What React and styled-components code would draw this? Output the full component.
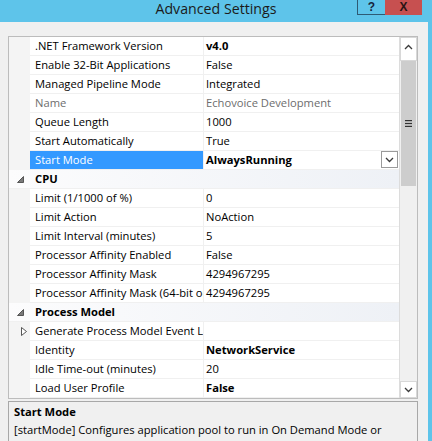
import React from 'react'
import styled, { createGlobalStyle } from 'styled-components'

const GlobalStyle = createGlobalStyle`
  html, body { margin: 0; padding: 0; }
  body {
    font-family: "Open Sans", "Noto Sans", sans-serif;
    font-size: 11.2px;
    color: #000;
  }
`

const rows = [
  { name: '.NET Framework Version', value: 'v4.0', bold: true },
  { name: 'Enable 32-Bit Applications', value: 'False' },
  { name: 'Managed Pipeline Mode', value: 'Integrated' },
  { name: 'Name', value: 'Echovoice Development', disabled: true },
  { name: 'Queue Length', value: '1000' },
  { name: 'Start Automatically', value: 'True' },
  { name: 'Start Mode', value: 'AlwaysRunning', bold: true, selected: true },
  { category: 'CPU' },
  { name: 'Limit (1/1000 of %)', value: '0' },
  { name: 'Limit Action', value: 'NoAction' },
  { name: 'Limit Interval (minutes)', value: '5' },
  { name: 'Processor Affinity Enabled', value: 'False' },
  { name: 'Processor Affinity Mask', value: '4294967295' },
  { name: 'Processor Affinity Mask (64-bit option)', value: '4294967295' },
  { category: 'Process Model' },
  { name: 'Generate Process Model Event Log Entry', value: '', collapsed: true },
  { name: 'Identity', value: 'NetworkService', bold: true },
  { name: 'Idle Time-out (minutes)', value: '20' },
  { name: 'Load User Profile', value: 'False', bold: true },
]

const Caret = ({ down }) => (
  <svg width="9" height="6" viewBox="0 0 9 6">
    <polyline
      points={down ? '1,1 4.5,4.5 8,1' : '1,5 4.5,1.5 8,5'}
      fill="none"
      stroke="#3a3a3a"
      strokeWidth="1.3"
    />
  </svg>
)

const ExpandedGlyph = () => (
  <svg width="7" height="7" viewBox="0 0 7 7">
    <polygon points="6.5,0.5 6.5,6.5 0.5,6.5" fill="#7a7a7a" stroke="#3c3c3c" strokeWidth="0.8" />
  </svg>
)

const CollapsedGlyph = () => (
  <svg width="6" height="9" viewBox="0 0 6 9">
    <polygon points="0.5,0.5 5.5,4.5 0.5,8.5" fill="#fff" stroke="#444" strokeWidth="0.9" />
  </svg>
)

const Grip = () => (
  <svg width="7" height="7" viewBox="0 0 7 7">
    <rect x="0" y="0" width="7" height="1.2" fill="#333" />
    <rect x="0" y="2.9" width="7" height="1.2" fill="#333" />
    <rect x="0" y="5.8" width="7" height="1.2" fill="#333" />
  </svg>
)

export default function App() {
  return (
    <Window>
      <GlobalStyle />
      <TitleBar>
        <Title>Advanced Settings</Title>
        <Controls>
          <HelpButton>?</HelpButton>
          <CloseButton>X</CloseButton>
        </Controls>
      </TitleBar>
      <Body>
        <Grid>
          <Rows>
            {rows.map((r, i) =>
              r.category ? (
                <CategoryRow key={i}>
                  <GlyphCell><ExpandedGlyph /></GlyphCell>
                  <CategoryName>{r.category}</CategoryName>
                </CategoryRow>
              ) : (
                <Row key={i}>
                  <Gutter>{r.collapsed && <CollapsedGlyph />}</Gutter>
                  <NameCell $selected={r.selected} $disabled={r.disabled}>
                    {r.name}
                  </NameCell>
                  <ValueCell $bold={r.bold} $disabled={r.disabled}>
                    <span>{r.value}</span>
                    {r.selected && (
                      <DropButton><Caret down /></DropButton>
                    )}
                  </ValueCell>
                </Row>
              )
            )}
          </Rows>
          <Scrollbar>
            <ArrowButton $tall><Caret /></ArrowButton>
            <Thumb><Grip /></Thumb>
            <ArrowButton $bottom><Caret down /></ArrowButton>
          </Scrollbar>
        </Grid>
        <Description>
          <DescTitle>Start Mode</DescTitle>
          <DescText>
            [startMode] Configures application pool to run in On Demand Mode or
            Always Running Mode.
          </DescText>
        </Description>
      </Body>
    </Window>
  )
}

const Window = styled.div`
  width: 432px;
  height: 441px;
  overflow: hidden;
  background: #5ec4ea;
  display: flex;
  flex-direction: column;
`

const TitleBar = styled.div`
  height: 22px;
  flex-shrink: 0;
  display: grid;
  grid-template-columns: 1fr auto 1fr;
  align-items: start;
`

const Title = styled.div`
  grid-column: 2;
  font-size: 14.2px;
  line-height: 18px;
  color: #1b1b1b;
`

const Controls = styled.div`
  grid-column: 3;
  justify-self: end;
  display: flex;
  margin-right: 10px;
`

const HelpButton = styled.div`
  width: 27px;
  height: 14px;
  border: 1px solid #2e5a74;
  border-top: none;
  border-right: none;
  text-align: center;
  font-family: "Liberation Sans", sans-serif;
  font-weight: bold;
  font-size: 12px;
  line-height: 14px;
  color: #17243d;
`

const CloseButton = styled.div`
  width: 37px;
  height: 15px;
  background: #c75050;
  text-align: center;
  font-family: "Liberation Sans", sans-serif;
  font-weight: bold;
  font-size: 12px;
  line-height: 15px;
  color: #2a1414;
`

const Body = styled.div`
  flex: 1;
  min-height: 0;
  margin-right: 4px;
  background: #f0f0f0;
  padding: 14px 10px 0 8px;
  display: flex;
  flex-direction: column;
`

const Grid = styled.div`
  flex-shrink: 0;
  height: 361px;
  border: 1px solid #bcbcbc;
  background: #fff;
  display: flex;
`

const Rows = styled.div`
  flex: 1;
  min-width: 0;
  display: flex;
  flex-direction: column;
  overflow: hidden;
`

const Row = styled.div`
  height: 19px;
  flex-shrink: 0;
  display: grid;
  grid-template-columns: 21px 174px 1fr;
`

const Gutter = styled.div`
  background: #f4f4f4;
  display: flex;
  align-items: center;
  padding-left: 12px;
`

const NameCell = styled.div`
  box-sizing: border-box;
  padding-left: 5px;
  line-height: 18px;
  white-space: nowrap;
  overflow: hidden;
  border-right: 1px solid #f0f0f0;
  border-bottom: 1px solid #f0f0f0;
  background: ${(p) => (p.$selected ? '#3399ff' : '#fff')};
  color: ${(p) => (p.$selected ? '#fff' : p.$disabled ? '#6d6d6d' : '#000')};
`

const ValueCell = styled.div`
  box-sizing: border-box;
  padding-left: 2px;
  line-height: 18px;
  white-space: nowrap;
  overflow: hidden;
  border-bottom: 1px solid #f0f0f0;
  display: flex;
  justify-content: space-between;
  align-items: flex-start;
  font-weight: ${(p) => (p.$bold ? 'bold' : 'normal')};
  color: ${(p) => (p.$disabled ? '#6d6d6d' : '#000')};
`

const DropButton = styled.div`
  box-sizing: border-box;
  width: 17px;
  height: 17px;
  margin-right: 1px;
  border: 1px solid #9a9a9a;
  background: #fff;
  display: flex;
  align-items: center;
  justify-content: center;
`

const CategoryRow = styled.div`
  height: 19px;
  flex-shrink: 0;
  display: grid;
  grid-template-columns: 26px 1fr;
  background: linear-gradient(to right, #fcfcfd, #eef1f6);
  border-bottom: 1px solid #f0f0f0;
  box-sizing: border-box;
`

const GlyphCell = styled.div`
  display: flex;
  align-items: center;
  padding-left: 8px;
`

const CategoryName = styled.div`
  font-weight: bold;
  line-height: 18px;
`

const Scrollbar = styled.div`
  width: 17px;
  flex-shrink: 0;
  background: #f0f0f0;
  border-left: 1px solid #dcdcdc;
  display: flex;
  flex-direction: column;
`

const ArrowButton = styled.div`
  box-sizing: border-box;
  height: ${(p) => (p.$tall ? '24px' : '17px')};
  margin-top: ${(p) => (p.$bottom ? 'auto' : '0')};
  background: #fff;
  border: 1px solid #d8d8d8;
  display: flex;
  align-items: ${(p) => (p.$tall ? 'flex-start' : 'center')};
  padding-top: ${(p) => (p.$tall ? '6px' : '0')};
  justify-content: center;
`

const Thumb = styled.div`
  height: 125px;
  margin: 0 1px;
  background: #cdcdcd;
  display: flex;
  align-items: center;
  justify-content: center;
`

const Description = styled.div`
  flex: 1;
  margin-top: 2px;
  border: 1px solid #a8a8a8;
  border-bottom: none;
  background: #f0f0f0;
  padding: 1px 5px 0;
  overflow: hidden;
`

const DescTitle = styled.div`
  font-weight: bold;
  line-height: 18px;
`

const DescText = styled.div`
  line-height: 18px;
`
